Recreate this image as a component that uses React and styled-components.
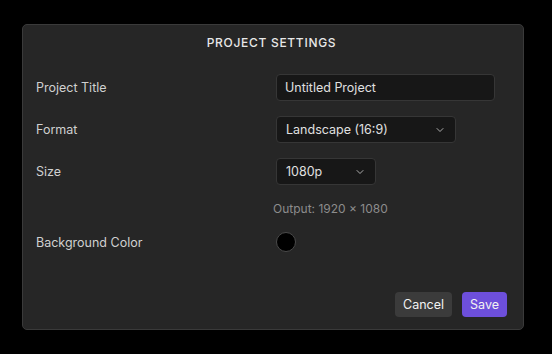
import React from "react";
import styled, { createGlobalStyle } from "styled-components";

const Global = createGlobalStyle`
  html, body {
    margin: 0;
    padding: 0;
    background: #000;
    font-family: Inter, "Noto Sans", sans-serif;
  }
`;

const Page = styled.div`
  width: 552px;
  height: 354px;
  padding: 24px 0 0 22px;
  box-sizing: border-box;
`;

const Dialog = styled.div`
  width: 502px;
  height: 306px;
  box-sizing: border-box;
  background: #262626;
  border: 1px solid #3a3a3a;
  border-radius: 5px;
  display: flex;
  flex-direction: column;
  padding: 10px 16px 12px 13px;
`;

const Title = styled.h2`
  margin: 0;
  text-align: center;
  font-size: 12px;
  line-height: 16px;
  font-weight: 500;
  letter-spacing: 0.7px;
  color: #e8e8e8;
  text-transform: uppercase;
`;

const Form = styled.div`
  display: grid;
  grid-template-columns: 240px 1fr;
  row-gap: 15px;
  align-items: center;
  margin-top: 23px;
`;

const Label = styled.label`
  font-size: 12.5px;
  color: #d0d0d0;
`;

const TextInput = styled.div`
  width: 219px;
  height: 27px;
  box-sizing: border-box;
  background: #171717;
  border: 1px solid #363636;
  border-radius: 4px;
  padding: 0 8px;
  display: flex;
  align-items: center;
  font-size: 12.5px;
  color: #e0e0e0;
`;

const Select = styled.div`
  width: ${(p) => p.$w}px;
  height: 27px;
  box-sizing: border-box;
  background: #171717;
  border: 1px solid #363636;
  border-radius: 4px;
  padding: 0 9px 0 9px;
  display: flex;
  align-items: center;
  justify-content: space-between;
  font-size: 12.5px;
  color: #e0e0e0;
`;

const Hint = styled.div`
  grid-column: 2;
  margin-left: -3px;
  font-size: 12px;
  line-height: 17px;
  color: #8c8c8c;
`;

const Swatch = styled.div`
  width: 20px;
  height: 20px;
  box-sizing: border-box;
  border-radius: 50%;
  background: ${(p) => p.$color};
  border: 1.5px solid #4a4a4a;
`;

const Footer = styled.div`
  margin-top: auto;
  display: flex;
  justify-content: flex-end;
  gap: 10px;
`;

const Button = styled.button`
  height: 25px;
  padding: 0 8px;
  border: none;
  border-radius: 4px;
  font-family: inherit;
  font-size: 12.5px;
  color: #f2f2f2;
  background: ${(p) => (p.$primary ? "#6d4fdb" : "#3b3b3b")};
`;

const Chevron = () => (
  <svg width="12" height="12" viewBox="0 0 24 24" fill="none" stroke="#bbb" strokeWidth="1.8" strokeLinecap="round" strokeLinejoin="round">
    <path d="m6 9 6 6 6-6" />
  </svg>
);

export default function App() {
  return (
    <Page>
      <Global />
      <Dialog>
        <Title>Project Settings</Title>
        <Form>
          <Label>Project Title</Label>
          <TextInput>Untitled Project</TextInput>

          <Label>Format</Label>
          <Select $w={180}>
            Landscape (16:9)
            <Chevron />
          </Select>

          <Label>Size</Label>
          <Select $w={100}>
            1080p
            <Chevron />
          </Select>

          <Hint>Output: 1920 × 1080</Hint>

          <Label>Background Color</Label>
          <Swatch $color="#000" />
        </Form>
        <Footer>
          <Button>Cancel</Button>
          <Button $primary>Save</Button>
        </Footer>
      </Dialog>
    </Page>
  );
}
